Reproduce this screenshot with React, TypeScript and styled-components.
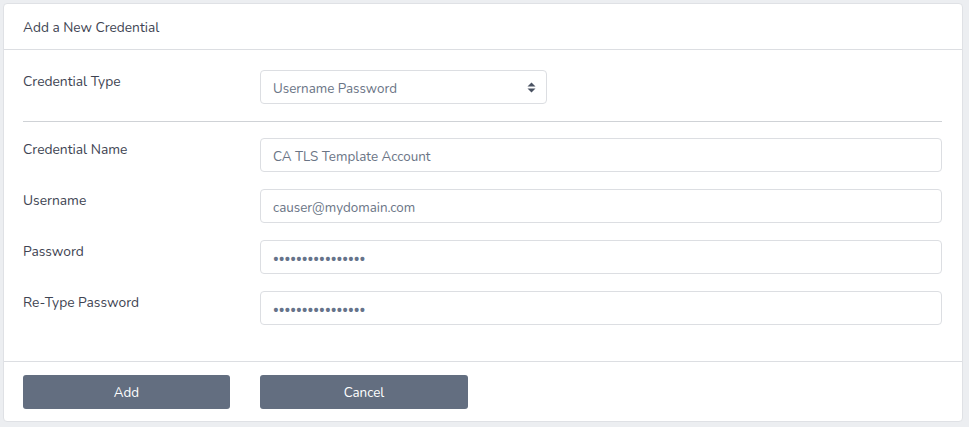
import React from "react";
import styled, { createGlobalStyle } from "styled-components";

const Global = createGlobalStyle`
  html, body { margin: 0; padding: 0; background: #eceef1; }
  body { font-family: "Nunito", "Lato", "Open Sans", sans-serif; }
  * { box-sizing: border-box; }
`;

const Page = styled.div`
  padding: 3px 6px 5px 3px;
`;

const Card = styled.div`
  background: #ffffff;
  border: 1px solid #dfe1e5;
  border-radius: 4px;
  display: flex;
  flex-direction: column;
`;

const Header = styled.div`
  height: 46px;
  padding: 1px 19px 0 19px;
  display: flex;
  align-items: center;
  border-bottom: 1px solid #dcdee2;
  font-size: 13.7px;
  color: #3e4452;
`;

const Body = styled.div`
  padding: 20px 20px 36px 19px;
  display: flex;
  flex-direction: column;
`;

const Row = styled.div`
  display: grid;
  grid-template-columns: 237px 1fr;
  align-items: start;
  & + & { margin-top: 17px; }
`;

const Label = styled.label`
  font-size: 13.8px;
  line-height: 20px;
  padding-top: 2px;
  color: #3e4452;
`;

const Divider = styled.hr`
  border: 0;
  border-top: 1px solid #cfd2d6;
  margin: 17px 0 16px 0;
  height: 0;
`;

const controlStyles = `
  height: 34px;
  border: 1px solid #dcdee2;
  border-radius: 4px;
  padding: 2px 12px 0 12px;
  font-family: "Nunito", "Lato", "Open Sans", sans-serif;
  font-size: 13.4px;
  color: #6a7485;
  background: #fff;
  outline: none;
`;

const Input = styled.input`
  ${controlStyles}
  width: 100%;
  display: block;
  &[type="password"] { font-size: 11px; letter-spacing: 0; color: #66738a; }
`;

const SelectWrap = styled.div`
  position: relative;
  width: 287px;
`;

const Select = styled.select`
  ${controlStyles}
  width: 100%;
  appearance: none;
  -webkit-appearance: none;
  display: block;
`;

const Arrow = styled.svg`
  position: absolute;
  right: 11px;
  top: 12px;
  pointer-events: none;
`;

const Footer = styled.div`
  border-top: 1px solid #dcdee2;
  padding: 13px 20px 12px 19px;
  display: grid;
  grid-template-columns: 237px 208px;
`;

const Button = styled.button<{ $w: number }>`
  width: ${(p) => p.$w}px;
  height: 34px;
  border: 0;
  border-radius: 3px;
  background: #636e80;
  color: #ffffff;
  font-family: "Nunito", "Lato", "Open Sans", sans-serif;
  font-size: 13.4px;
  padding-top: 2px;
  cursor: pointer;
`;

export default function App() {
  return (
    <>
      <Global />
      <Page>
        <Card>
          <Header>Add a New Credential</Header>
          <Body>
            <Row>
              <Label>Credential Type</Label>
              <SelectWrap>
                <Select defaultValue="up">
                  <option value="up">Username Password</option>
                </Select>
                <Arrow width="9" height="11" viewBox="0 0 9 11">
                  <path d="M4.5 0.5 L8.5 4.5 H0.5 Z" fill="#4a5262" />
                  <path d="M4.5 10.5 L8.5 6.5 H0.5 Z" fill="#4a5262" />
                </Arrow>
              </SelectWrap>
            </Row>
            <Divider />
            <Row>
              <Label>Credential Name</Label>
              <Input defaultValue="CA TLS Template Account" />
            </Row>
            <Row>
              <Label>Username</Label>
              <Input defaultValue="causer@mydomain.com" />
            </Row>
            <Row>
              <Label>Password</Label>
              <Input type="password" defaultValue="aaaaaaaaaaaaaaaa" />
            </Row>
            <Row>
              <Label>Re-Type Password</Label>
              <Input type="password" defaultValue="aaaaaaaaaaaaaaaa" />
            </Row>
          </Body>
          <Footer>
            <Button $w={207}>Add</Button>
            <Button $w={208}>Cancel</Button>
          </Footer>
        </Card>
      </Page>
    </>
  );
}
